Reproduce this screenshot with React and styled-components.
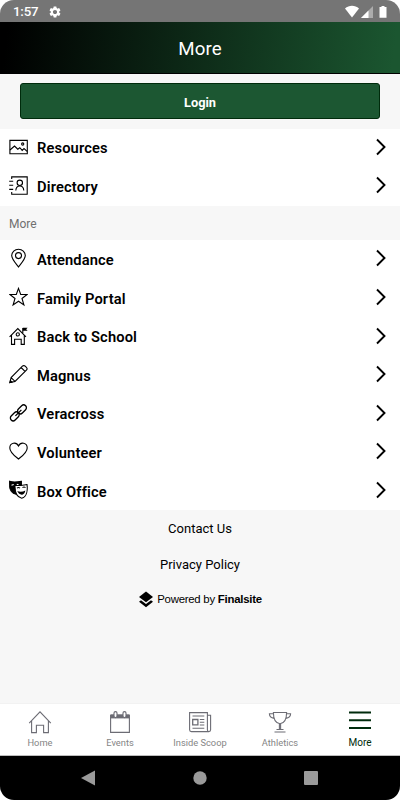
import React from 'react'
import styled, { createGlobalStyle } from 'styled-components'
import { MdSettings } from 'react-icons/md'

const GlobalStyle = createGlobalStyle`
  * { box-sizing: border-box; }
  body { margin: 0; background: #fff; }
`

const Screen = styled.div`
  width: 400px;
  height: 800px;
  display: flex;
  flex-direction: column;
  overflow: hidden;
  border-radius: 14px;
  background: #f7f7f7;
  color: #000;
  font-family: Roboto, sans-serif;
`

const StatusBar = styled.div`
  height: 22px;
  flex: none;
  display: flex;
  align-items: center;
  padding: 1px 13px 0;
  background: #757575;
  color: #fff;
`

const Clock = styled.span`
  width: 35px;
  font-size: 13.3px;
  font-weight: 500;
  letter-spacing: -0.2px;
`

const StatusIcons = styled.svg`
  margin-left: auto;
`

const Header = styled.header`
  height: 52px;
  flex: none;
  display: flex;
  align-items: center;
  justify-content: center;
  padding-top: 2px;
  border-bottom: 1px solid #000;
  background: linear-gradient(97deg, #000 2%, #1b5630 98%);
  color: #fff;
  font-size: 18.7px;
  letter-spacing: 0.1px;
`

const LoginArea = styled.div`
  height: 54.5px;
  flex: none;
  padding: 9px 20px 0;
`

const LoginButton = styled.button`
  width: 100%;
  height: 36px;
  padding: 2px 0 0;
  border: 1px solid #002b0c;
  border-radius: 3px;
  background: #1c5732;
  color: #fff;
  font: 700 12.8px Roboto, sans-serif;
`

const List = styled.div`
  flex: none;
  background: #fff;
`

const Row = styled.div`
  height: 38.6px;
  display: flex;
  align-items: center;
  padding: 0 14px 0 9px;
`

const RowIcon = styled.svg`
  width: 19px;
  height: 20px;
  flex: none;
  margin-top: -2px;
  fill: none;
  stroke: #000;
  stroke-width: 1.1;
`

const RowLabel = styled.span`
  flex: 1;
  margin-left: 9px;
  padding-top: 1px;
  font-size: 14.7px;
  font-weight: 600;
  letter-spacing: 0.13px;
`

const Chevron = styled.svg`
  width: 11px;
  height: 18px;
  margin-top: -2px;
  fill: none;
  stroke: #000;
  stroke-width: 1.9;
`

const SectionTitle = styled.div`
  height: 34.5px;
  flex: none;
  display: flex;
  align-items: center;
  padding: 2px 9px 0;
  color: #707070;
  font-size: 12px;
`

const Footer = styled.footer`
  flex: 1;
  display: flex;
  flex-direction: column;
  align-items: center;
`

const FooterLink = styled.a`
  height: 36px;
  display: flex;
  align-items: center;
  font-size: 13px;
  letter-spacing: 0;
`

const Powered = styled.div`
  height: 34px;
  display: flex;
  align-items: center;
  gap: 3px;
  font-family: 'Liberation Sans', sans-serif;
  font-size: 11.4px;
  letter-spacing: -0.25px;
`

const TabBar = styled.nav`
  height: 53px;
  flex: none;
  display: grid;
  grid-template-columns: repeat(5, 1fr);
  border-top: 1px solid #f2f2f2;
  border-bottom: 1px solid #bdbdbd;
  background: #fff;
`

const Tab = styled.div`
  display: flex;
  flex-direction: column;
  align-items: center;
  padding-top: 6px;
  color: ${p => (p.$active ? '#002b0c' : '#858585')};
  font-size: ${p => (p.$active ? '10px' : '9.3px')};
  line-height: 16px;
  letter-spacing: 0;
`

const TabIcon = styled.svg`
  width: 24px;
  height: 24px;
  flex: none;
  margin-bottom: 1px;
  fill: none;
  stroke: ${p => (p.$active ? '#002b0c' : '#6c6c74')};
  stroke-width: ${p => (p.$active ? 2 : 1.1)};
`

const SystemNav = styled.div`
  height: 44px;
  flex: none;
  display: flex;
  align-items: center;
  justify-content: space-between;
  padding: 0 82px 0 81px;
  background: #000;
  fill: #9a9a9a;
`

const icons = {
  image: (
    <>
      <path d="M.9 3.4h17.4v13.4H.9z" />
      <path d="M1 13l4.5-4 3.3 3.2 2-1.5 2.4 2.7 1.8-1.8 3.1 2.8" />
      <circle cx="13.7" cy="7" r="1.1" />
    </>
  ),
  contacts: (
    <>
      <path d="M2.7 4V1.900h15.500v17.300H2.700V17M.2 6.200h4M.2 10.300h4M.2 14.400h4" />
      <circle cx="10.8" cy="7.8" r="2.7" />
      <path d="M6.800 15.500c.2-3 1.800-4.500 4-4.500s3.800 1.500 4 4.500" />
    </>
  ),
  pin: (
    <>
      <path d="M9.5 19C7 15.7 2.7 11.3 2.7 7.6a6.8 6.4 0 0 1 13.6 0C16.3 11.3 12 15.7 9.5 19z" />
      <circle cx="9.5" cy="7.6" r="3" />
    </>
  ),
  star: <path d="M9.5 1.4l2.2 6.1h6.4l-5.1 4 1.9 6.5-5.4-3.8L4.1 18 6 11.5l-5.1-4h6.4z" />,
  school: (
    <>
      <path d="M.6 10.8l8.2-8.2 8.2 8.2M2.5 9.2v9.200h3.100v-5.200h6.600v5.200h3.100V9.200" />
      <circle cx="8.8" cy="8.4" r="1.6" />
      <path d="M13.800 7V2" />
      <path d="M13.800 1.700h4.800l-1.400 1.500 1.400 1.500h-4.800z" fill="#000" stroke="none" />
    </>
  ),
  pencil: (
    <>
      <path d="M.9 18.600l1.200-5L13.400 2.200c.8-.8 2-.8 2.800 0l1.200 1.200c.8.8.8 2 0 2.800L6 17.400zM2.100 13.600L6 17.400M12.100 3.500l3.900 3.900" />
      <path d="M.9 18.600l.5-2 1.500 1.500z" fill="#000" />
    </>
  ),
  link: (
    <g strokeWidth="1.3">
      <rect x="-2.8" y="-5.1" width="5.6" height="10.2" rx="2.8" transform="translate(13 6.4) rotate(45)" />
      <rect x="-2.8" y="-5.1" width="5.6" height="10.2" rx="2.8" transform="translate(5.8 13.4) rotate(45)" />
      <path d="M6.400 12.900l6-6" />
    </g>
  ),
  heart: <path d="M9.5 18C6 15.2.8 11.5.8 6.9.8 1.8 7.3.4 9.5 5c2.2-4.6 8.7-3.2 8.7 1.9 0 4.6-5.200 8.300-8.700 11.100z" />,
  masks: (
    <>
      <path d="M.6 1.300c3 .9 6.600.9 11.800 0v4L7 14.200C3 13.400.8 10 .7 7z" fill="#000" />
      <path d="M2.500 5.300l2.200-.8M7.800 4.400l1.800.3" stroke="#fff" />
      <path d="M6 5.200c4 1 8-.2 12-.7.7 5 .2 12.300-5.300 13.700C7.300 17 5.800 10.500 6 5.200z" fill="#fff" />
      <path d="M8 8.200c1-1 2-.9 3 0M13.500 7.700c1-.9 2-.9 3 0" />
      <path d="M8.300 11.100c2.500 1.200 5.400 1 8-.6-.3 5.100-6 5.800-8 .6z" fill="#000" stroke="none" />
    </>
  ),
}

const tabs = [
  {
    label: 'Home',
    icon: <path d="M1.2 13.2L12 1.8l10.8 11.4M3.6 11v11.6h4.8v-7.3h7.2v7.3h4.8V11" />,
  },
  {
    label: 'Events',
    icon: (
      <>
        <path d="M2.600 5.200h18.800v17.200H2.600z" />
        <path d="M2.600 4.400h18.800v4H2.600z" fill="#6c6c74" stroke="none" />
        <rect x="6" y="1.6" width="3" height="6" rx="1.5" fill="#fff" />
        <rect x="15" y="1.6" width="3" height="6" rx="1.5" fill="#fff" />
      </>
    ),
  },
  {
    label: 'Inside Scoop',
    icon: (
      <>
        <path d="M1.600 2.600h17.800v17.200c0 1 .5 1.800 1.400 1.800H3.400c-1.200 0-1.800-.8-1.800-1.800zM19.400 5.200h3.200v14.600c0 1.200-.7 1.800-1.800 1.800" />
        <path d="M4.500 6h11.800M11.800 9.500h4.500M11.800 12.200h4.500M11.800 15h4.500M4.500 18.300h11.800" />
        <path d="M4.700 9.500h5.200v5.300H4.700z" strokeWidth="1.3" />
      </>
    ),
  },
  {
    label: 'Athletics',
    icon: (
      <>
        <path d="M5.400 2.500h13.200c0 6-2 10.800-6.600 11.200C7.400 13.300 5.400 8.500 5.400 2.500zM5.300 3.700H1.400c0 2.200 2 4.200 4.800 4.700M18.700 3.700h3.900c0 2.200-2 4.200-4.800 4.700" />
        <path d="M11.400 13.700v5.800M12.600 13.700v5.800M8.500 19.500h7M6.500 22h11" />
      </>
    ),
  },
  { label: 'More', active: true, icon: <path d="M1 2.500h22M1 10.300h22M1 18h22" /> },
]

const accountItems = [
  { label: 'Resources', icon: 'image' },
  { label: 'Directory', icon: 'contacts' },
]

const moreItems = [
  { label: 'Attendance', icon: 'pin' },
  { label: 'Family Portal', icon: 'star' },
  { label: 'Back to School', icon: 'school' },
  { label: 'Magnus', icon: 'pencil' },
  { label: 'Veracross', icon: 'link' },
  { label: 'Volunteer', icon: 'heart' },
  { label: 'Box Office', icon: 'masks' },
]

const MenuList = ({ items }) => (
  <List>
    {items.map(item => (
      <Row key={item.label}>
        <RowIcon viewBox="0 0 19 20">{icons[item.icon]}</RowIcon>
        <RowLabel>{item.label}</RowLabel>
        <Chevron viewBox="0 0 11 18">
          <path d="M2 1.500l7.500 7.500L2 16.500" />
        </Chevron>
      </Row>
    ))}
  </List>
)

const App = () => (
  <>
    <GlobalStyle />
    <Screen>
      <StatusBar>
        <Clock>1:57</Clock>
        <MdSettings size={14} />
        <StatusIcons width="42" height="14" viewBox="0 0 42 14" fill="#fff">
          <path d="M0 3.500C4-.1 10-.1 14 3.500L7 12.500z" />
          <path d="M28 1v12H16z" opacity=".4" />
          <path d="M23.500 5.500V13H16z" />
          <path d="M36.500 1h3v1h2v10.800h-7V2h2z" />
        </StatusIcons>
      </StatusBar>
      <Header>More</Header>
      <LoginArea>
        <LoginButton>Login</LoginButton>
      </LoginArea>
      <MenuList items={accountItems} />
      <SectionTitle>More</SectionTitle>
      <MenuList items={moreItems} />
      <Footer>
        <FooterLink>Contact Us</FooterLink>
        <FooterLink>Privacy Policy</FooterLink>
        <Powered>
          <svg width="16" height="17" viewBox="0 0 16 17">
            <path d="M8 .5L15 6l-7 5.200L1 6z" />
            <path d="M1 10.800l2-1.500 5 3.700 5-3.700 2 1.500-7 5.500z" />
          </svg>
          <span>
            Powered by <b>Finalsite</b>
          </span>
        </Powered>
      </Footer>
      <TabBar>
        {tabs.map(tab => (
          <Tab key={tab.label} $active={tab.active}>
            <TabIcon viewBox="0 0 24 24" $active={tab.active}>
              {tab.icon}
            </TabIcon>
            {tab.label}
          </Tab>
        ))}
      </TabBar>
      <SystemNav>
        <svg width="14" height="16" viewBox="0 0 14 16">
          <path d="M0 8L14 .5v15z" />
        </svg>
        <svg width="14" height="14" viewBox="0 0 14 14">
          <circle cx="7" cy="7" r="6.7" />
        </svg>
        <svg width="14" height="14" viewBox="0 0 14 14">
          <rect width="14" height="14" rx="1" />
        </svg>
      </SystemNav>
    </Screen>
  </>
)

export default App
